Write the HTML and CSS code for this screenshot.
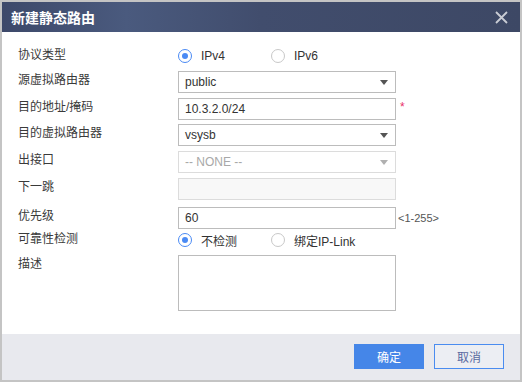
FILE: index.html
```html
<!DOCTYPE html>
<html lang="zh-CN">
<head>
  <meta charset="UTF-8">
  <title>新建静态路由</title>
  <link rel="stylesheet" href="styles.css">
</head>
<body>
  <div class="dialog">
    <div class="dialog-header">
      <span class="dialog-title">新建静态路由</span>
      <span class="close-btn">
        <svg width="13" height="13" viewBox="0 0 13 13">
          <path d="M1 1 L12 12 M12 1 L1 12" stroke="#c9ccd4" stroke-width="1.8" fill="none"/>
        </svg>
      </span>
    </div>

    <div class="dialog-body">
      <div class="form-row row-radio first">
        <label class="form-label">协议类型</label>
        <div class="radio-group">
          <span class="radio-item"><span class="radio checked"></span>IPv4</span>
          <span class="radio-item"><span class="radio"></span>IPv6</span>
        </div>
      </div>

      <div class="form-row">
        <label class="form-label">源虚拟路由器</label>
        <div class="select"><span>public</span><span class="arrow"></span></div>
      </div>

      <div class="form-row">
        <label class="form-label">目的地址/掩码</label>
        <input class="text-input" type="text" value="10.3.2.0/24">
        <span class="required">*</span>
      </div>

      <div class="form-row tight">
        <label class="form-label">目的虚拟路由器</label>
        <div class="select"><span>vsysb</span><span class="arrow"></span></div>
      </div>

      <div class="form-row">
        <label class="form-label">出接口</label>
        <div class="select disabled"><span>-- NONE --</span><span class="arrow"></span></div>
      </div>

      <div class="form-row">
        <label class="form-label">下一跳</label>
        <input class="text-input" type="text" value="" disabled>
      </div>

      <div class="form-row wide">
        <label class="form-label">优先级</label>
        <input class="text-input" type="text" value="60">
        <span class="hint">&lt;1-255&gt;</span>
      </div>

      <div class="form-row row-radio after-input">
        <label class="form-label">可靠性检测</label>
        <div class="radio-group">
          <span class="radio-item"><span class="radio checked"></span>不检测</span>
          <span class="radio-item"><span class="radio"></span>绑定IP-Link</span>
        </div>
      </div>

      <div class="form-row">
        <label class="form-label">描述</label>
        <textarea class="text-area"></textarea>
      </div>
    </div>

    <div class="dialog-footer">
      <button class="btn btn-primary">确定</button>
      <button class="btn btn-default">取消</button>
    </div>
  </div>
</body>
</html>
```

FILE: styles.css
```css
body {
  margin: 0;
  padding: 0;
  font-family: 'Liberation Sans', 'Noto Sans CJK SC', sans-serif;
  font-size: 12px;
  color: #333;
  background: #fff;
}

.dialog {
  width: 522px;
  height: 382px;
  box-sizing: border-box;
  border: 2px solid #c4c4c4;
  display: flex;
  flex-direction: column;
  background: #fff;
}

.dialog-header {
  height: 30px;
  flex: none;
  display: flex;
  align-items: center;
  justify-content: space-between;
  padding: 0 12px 0 9px;
  background: linear-gradient(to right, #3d496a 0%, #4a5a7e 24%, #414d6d 50%, #3d4865 100%);
}

.dialog-title {
  color: #fff;
  font-size: 14px;
  font-weight: bold;
}

.close-btn {
  display: flex;
  cursor: pointer;
}

.dialog-body {
  flex: 1;
  display: flex;
  flex-direction: column;
}

.form-row {
  display: flex;
  align-items: flex-start;
  margin-top: 5px;
}

.form-row.first {
  margin-top: 14px;
}

.form-row.tight {
  margin-top: 4px;
}

.form-row.wide {
  margin-top: 7px;
}

.form-row.after-input {
  margin-top: 1px;
}

.form-label {
  width: 176px;
  padding-left: 16px;
  line-height: 18px;
  flex: none;
  box-sizing: border-box;
  color: #3a3a3a;
}

.row-radio {
  height: 20px;
  align-items: center;
}

.row-radio .form-label {
  align-self: flex-start;
}

.radio-group {
  display: flex;
  align-items: center;
}

.radio-item {
  width: 93px;
  display: flex;
  align-items: center;
}

.radio {
  width: 14px;
  height: 14px;
  box-sizing: border-box;
  border: 1px solid #c8c8c8;
  border-radius: 50%;
  margin-right: 9px;
  background: #fff;
  display: flex;
  align-items: center;
  justify-content: center;
}

.radio.checked {
  border-color: #4a8af4;
}

.radio.checked::after {
  content: "";
  width: 6px;
  height: 6px;
  border-radius: 50%;
  background: #4a8af4;
}

.select,
.text-input {
  width: 218px;
  height: 22px;
  box-sizing: border-box;
  border: 1px solid #bcbcbc;
  background: #fff;
  font-family: 'Liberation Sans', 'Noto Sans CJK SC', sans-serif;
  font-size: 12px;
  color: #333;
}

.select {
  display: flex;
  align-items: center;
  padding: 0 7px 0 6px;
}

.select .arrow {
  margin-left: auto;
  width: 0;
  height: 0;
  border-left: 4px solid transparent;
  border-right: 4px solid transparent;
  border-top: 5px solid #555;
}

.select.disabled {
  border-color: #dcdcdc;
  color: #a8a8a8;
}

.select.disabled .arrow {
  border-top-color: #b0b0b0;
}

.text-input {
  padding: 0 6px;
  margin: 0;
  outline: none;
}

.text-input:disabled {
  background: #f8f8f8;
  border-color: #dcdcdc;
}

.required {
  color: #e8306a;
  margin-left: 4px;
  line-height: 18px;
}

.hint {
  color: #555;
  font-size: 11px;
  margin-left: 2px;
  line-height: 22px;
}

.text-area {
  width: 218px;
  height: 56px;
  box-sizing: border-box;
  border: 1px solid #bcbcbc;
  margin: 0;
  padding: 4px 6px;
  resize: none;
  outline: none;
  font-family: 'Liberation Sans', 'Noto Sans CJK SC', sans-serif;
  font-size: 12px;
}

.dialog-footer {
  height: 46px;
  flex: none;
  background: #e8e9ee;
  display: flex;
  justify-content: flex-end;
  align-items: flex-start;
  gap: 10px;
  padding: 10px 16px 0 0;
  box-sizing: border-box;
}

.btn {
  width: 70px;
  height: 25px;
  box-sizing: border-box;
  font-family: 'Noto Sans CJK SC', sans-serif;
  font-size: 12px;
  cursor: pointer;
  padding: 0;
}

.btn-primary {
  background: #4586e8;
  border: 1px solid #4586e8;
  color: #fff;
}

.btn-default {
  background: #eceef3;
  border: 1px solid #4a8cf0;
  color: #5a6aa0;
}
```
